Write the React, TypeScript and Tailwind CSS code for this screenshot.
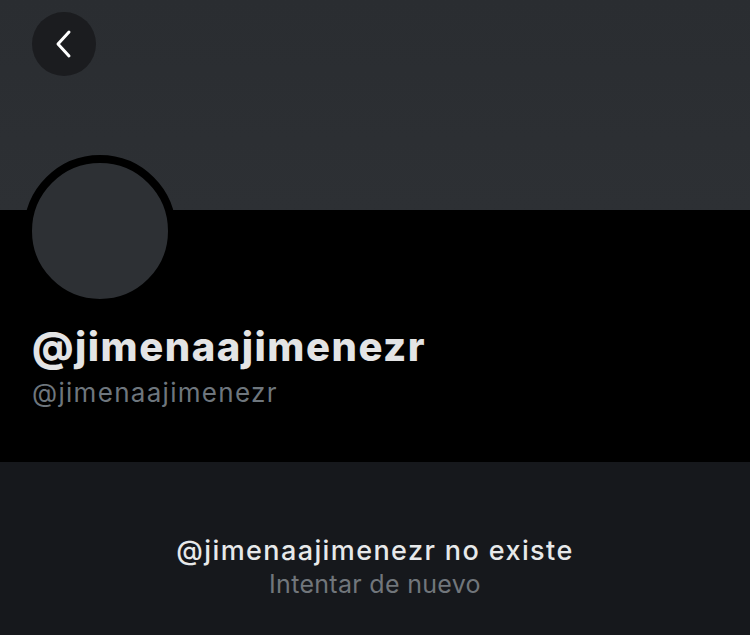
import React from "react";

export default function App() {
  return (
    <div className="w-[750px] h-[635px] flex flex-col bg-[#16181c] overflow-hidden" style={{ fontFamily: "Inter, 'Noto Sans', sans-serif" }}>
      {/* banner */}
      <div className="h-[210px] bg-gradient-to-b from-[#2a2d31] to-[#2d3034] px-8 pt-3 shrink-0">
        <button className="w-16 h-16 rounded-full bg-[#1b1c1f] flex items-center justify-center">
          <svg width="22" height="30" viewBox="0 0 22 30" fill="none">
            <path d="M16 3 L5 15 L16 27" stroke="#ffffff" strokeWidth="3" strokeLinecap="round" strokeLinejoin="round" />
          </svg>
        </button>
      </div>

      {/* profile */}
      <div className="h-[252px] bg-black px-8 shrink-0">
        <div className="-mt-[55px] -ml-2 w-[152px] h-[152px] rounded-full border-[8px] border-black bg-[#2d3034]" />
        <div className="mt-[17px] text-[40px] leading-[46px] font-extrabold text-[#e3e4e5] tracking-[1.5px]">@jimenaajimenezr</div>
        <div className="mt-[7px] text-[26px] leading-[32px] text-[#6e767d] tracking-[1.3px]">@jimenaajimenezr</div>
      </div>

      {/* empty state */}
      <div className="flex-1 flex flex-col items-center pt-[72px]">
        <div className="text-[27px] leading-[34px] font-medium text-[#e7e9ea] tracking-[1.4px]">@jimenaajimenezr no existe</div>
        <div className="mt-[1px] text-[25px] leading-[30px] text-[#71767b] tracking-[0.3px]">Intentar de nuevo</div>
      </div>
    </div>
  );
}
